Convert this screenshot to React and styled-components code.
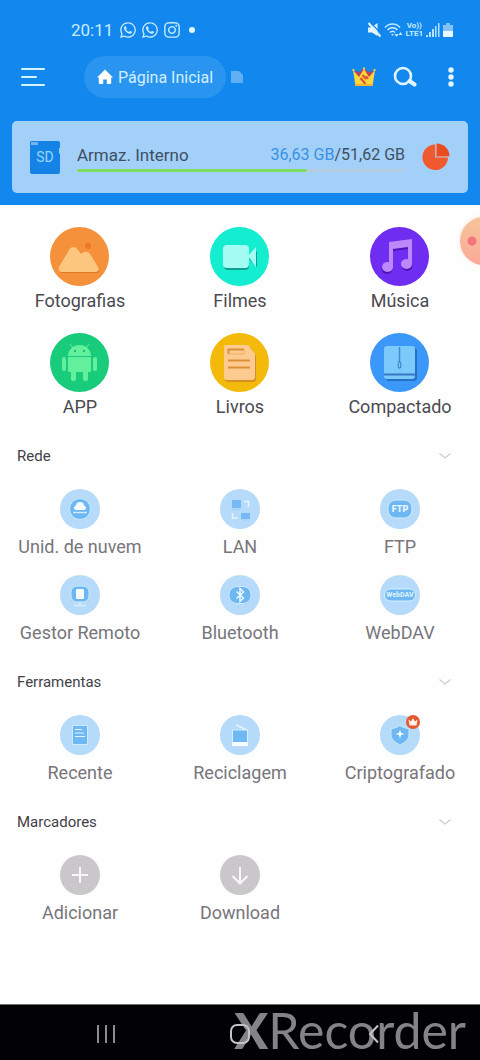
import { useState } from "react";
import styled, { createGlobalStyle } from "styled-components";
import { FaInstagram, FaWhatsapp } from "react-icons/fa";

const GlobalStyle = createGlobalStyle`
  * {
    box-sizing: border-box;
  }
  body {
    margin: 0;
    background: #fefefe;
    font-family: Roboto, "Liberation Sans", sans-serif;
  }
  button {
    margin: 0;
    padding: 0;
    border: none;
    background: none;
    font-family: inherit;
    cursor: pointer;
  }
  svg {
    display: block;
    flex-shrink: 0;
  }
`;

/* ---------- status bar icons ---------- */

const MuteIcon = () => (
  <svg width="14" height="16" viewBox="0 0 14 16">
    <path d="M1 5.500h3L10.500 1v13L5 10.500H1z" fill="#e4f7ff" />
    <path d="M4 1L14 11.500" stroke="#1287ee" strokeWidth="1.200" />
    <path d="M1.500 1L13.500 14.500" stroke="#e4f7ff" strokeWidth="2" />
  </svg>
);

const WifiIcon = () => (
  <svg width="19" height="16" viewBox="0 0 19 16" fill="none" stroke="#c4eaff">
    <path d="M1 5.500C5 0.800 12 0.800 16 5.500" strokeWidth="1.600" />
    <path d="M3.500 8C6.500 4.800 10.500 4.800 13.500 8" strokeWidth="1.600" />
    <path d="M6 10.500C7.500 9 9.500 9 11 10.500" strokeWidth="1.600" />
    <circle cx="8.500" cy="12.800" r="1" fill="#c4eaff" stroke="none" />
    <path
      d="M10.500 12h4l-2 3zM14.500 13h4l-2-3z"
      fill="#c4eaff"
      stroke="none"
    />
  </svg>
);

const SignalIcon = () => (
  <svg width="14" height="16" viewBox="0 0 14 16" fill="#b4e0ff">
    <rect x="0" y="13" width="2" height="2" />
    <rect x="3" y="10" width="2" height="5" />
    <rect x="6" y="7" width="2" height="8" />
    <rect x="9" y="4" width="1.500" height="11" />
    <rect x="12" y="1" width="1.500" height="14" />
  </svg>
);

const BatteryIcon = () => (
  <svg width="10" height="16" viewBox="0 0 10 16">
    <path d="M3 1h4v2h3v6H0V3h3z" fill="#86c1f7" />
    <path d="M0 9h10v5a1 1 0 0 1-1 1H1a1 1 0 0 1-1-1z" fill="#e9faff" />
  </svg>
);

/* ---------- toolbar icons ---------- */

const MenuIcon = () => (
  <svg width="24" height="20" viewBox="0 0 24 20" fill="#d4f3ff">
    <rect x="0" y="1" width="24" height="2" rx="1" />
    <rect x="0" y="9" width="16" height="2" rx="1" />
    <rect x="0" y="17" width="24" height="2" rx="1" />
  </svg>
);

const HomeIcon = () => (
  <svg width="16" height="16" viewBox="0 0 16 16" fill="#fff">
    <path d="M8 0.500L16 8.500h-1.800V14a1 1 0 0 1-1 1H9.800v-4.500H6.200V15H2.800a1 1 0 0 1-1-1V8.500H0z" />
  </svg>
);

const CrownIcon = () => (
  <svg width="24" height="20" viewBox="0 0 24 20">
    <path d="M3 4l5 1 4-4 4 4 5-1-2 10H5z" fill="#b8435f" />
    <path d="M1 3l6 7 5-8 5 8 6-7-2.500 16h-17z" fill="#fbd63a" />
    <path
      d="M10.500 8l3.500 4M8.500 11l5 6M14 9l2 3"
      stroke="#e2503c"
      strokeWidth="2"
    />
    <path d="M3.500 17h17l-.3 2H3.800z" fill="#f5b32e" />
    <circle cx="1.500" cy="3" r="1.200" fill="#f2c64e" />
    <circle cx="12" cy="1.500" r="1.200" fill="#f2c64e" />
    <circle cx="22.500" cy="3" r="1.200" fill="#f2c64e" />
  </svg>
);

const SearchIcon = () => (
  <svg width="24" height="22" viewBox="0 0 24 22" fill="none" stroke="#dff5ff">
    <circle cx="10" cy="10" r="8" strokeWidth="2.600" />
    <path d="M16.500 15L21.500 18.500" strokeWidth="4" strokeLinecap="round" />
  </svg>
);

const MoreIcon = () => (
  <svg width="6" height="20" viewBox="0 0 6 20" fill="#e4f7ff">
    <circle cx="3" cy="3" r="2.700" />
    <circle cx="3" cy="10" r="2.700" />
    <circle cx="3" cy="17" r="2.700" />
  </svg>
);

const TabIcon = () => (
  <svg width="14" height="14" viewBox="0 0 14 14">
    <path d="M1 1h8l4 4v7a1 1 0 0 1-1 1H1z" fill="#5fb0f5" />
  </svg>
);

/* ---------- storage card icons ---------- */

const SdIcon = () => (
  <svg width="30" height="34" viewBox="0 0 30 34">
    <path
      d="M1 1h27a2 2 0 0 1 2 2v5h-1v5l1 1v18a2 2 0 0 1-2 2H2a2 2 0 0 1-2-2V2z"
      fill="#1583e6"
    />
    <path d="M1 2h7v3H1z" fill="#6db5f3" />
    <text
      x="15"
      y="22"
      textAnchor="middle"
      fontFamily="Roboto, sans-serif"
      fontSize="14"
      fill="#9bd6fb"
    >
      SD
    </text>
  </svg>
);

const PieIcon = () => (
  <svg width="28" height="28" viewBox="0 0 28 28">
    <path d="M13 1.500A12.800 12.800 0 1 0 26 14.500H13z" fill="#f1592f" />
    <path d="M14.500 0.500V13H27.500A12.800 12.800 0 0 0 14.500 0.500z" fill="#ea4c22" />
    <path d="M14 1v12.500h13" fill="none" stroke="#e99079" />
  </svg>
);

const ChevronIcon = () => (
  <svg width="14" height="8" viewBox="0 0 14 8">
    <path d="M1.500 1.500L7 6l5.500-4.500" fill="none" stroke="#cfccd3" strokeWidth="1.300" />
  </svg>
);

/* ---------- category drawings, 60 x 60 ---------- */

const photos = (
  <>
    <circle cx="38" cy="19" r="3" fill="#e8792a" />
    <path
      d="M13 46c-3 0-4-2-3-4l11-18c2-3 5-3 7 0l3 5c2-3 6-4 8 0l10 13c1 3-1 4-3 4z"
      fill="#e0762a"
    />
    <path
      d="M12 45c-3 0-4-2-3-5l10-17c2-4 7-4 9 0l3 4c3-3 7-3 9 0l8 13c2 3 0 5-3 5z"
      fill="#fdc67f"
    />
  </>
);

const movies = (
  <>
    <g fill="#0da093">
      <rect x="14" y="20" width="25" height="23" rx="4" />
      <path d="M39 32l8 8V24z" />
    </g>
    <g fill="#a3fdf2">
      <rect x="13" y="18" width="26" height="23" rx="4" />
      <path d="M38 29l8-9v20z" />
    </g>
  </>
);

const music = (
  <>
    <g transform="translate(0 2)" fill="#4a17b5">
      <path d="M19 15l23-3v26h-4V20l-15 2v18h-4z" />
      <ellipse cx="17" cy="40" rx="5.500" ry="5" />
      <ellipse cx="37" cy="37" rx="5.500" ry="5" />
    </g>
    <g fill="#bd88fb">
      <path d="M19 15l23-3v26h-4V20l-15 2v18h-4z" />
      <ellipse cx="17.500" cy="40" rx="5.500" ry="5" />
      <ellipse cx="36.500" cy="37" rx="5.500" ry="5" />
    </g>
  </>
);

const android = (
  <g fill="#63f09c">
    <path d="M18 23a11.500 11 0 0 1 23 0z" />
    <path d="M20 11l3 4M39 11l-3 4" stroke="#63f09c" />
    <rect x="18" y="24" width="23" height="15" rx="1" />
    <rect x="12" y="24" width="4" height="14" rx="2" />
    <rect x="43" y="24" width="4" height="14" rx="2" />
    <rect x="21" y="36" width="5" height="12" rx="2" />
    <rect x="33" y="36" width="5" height="12" rx="2" />
    <circle cx="25" cy="18" r="1" fill="#17a765" />
    <circle cx="34" cy="18" r="1" fill="#17a765" />
  </g>
);

const books = (
  <>
    <path d="M18 14h22l6 9v23a3 3 0 0 1-3 3H18a3 3 0 0 1-3-3V17z" fill="#d68f26" />
    <path d="M17 12h21l7 9v23a3 3 0 0 1-3 3H17a3 3 0 0 1-3-3V15a3 3 0 0 1 3-3z" fill="#fdca90" />
    <path d="M18.500 21v-4.500H34" fill="none" stroke="#dc8f35" strokeWidth="2" />
    <path d="M34 17v4H19" fill="none" stroke="#f0ae60" />
    <path d="M18 27.500h22M18 34.500h22" stroke="#dc8f35" strokeWidth="2" />
  </>
);

const zip = (
  <>
    <rect x="16" y="15" width="31" height="33" rx="3" fill="#2670c6" />
    <rect x="14" y="13" width="31" height="33" rx="3" fill="#7ccafc" />
    <path d="M14 41.500h31" stroke="#3779c0" strokeWidth="2" />
    <path d="M29.500 14v15" stroke="#4588cc" strokeWidth="1.500" />
    <path d="M29.500 28l1.500 3-.5 4h-2l-.5-4z" fill="#7ccafc" stroke="#3779c0" />
  </>
);

/* ---------- network and tool drawings, 40 x 40 ---------- */

const cloud = (
  <>
    <circle cx="20" cy="20" r="10.500" fill="#6fb7f2" stroke="#c9ecff" />
    <path d="M15 21a2.500 2.500 0 0 1 1-4.500 4 3.500 0 0 1 8 0 2.500 2.500 0 0 1 1 4.500z" fill="#f4fcff" />
    <path d="M13 23.500h14" stroke="#cdeaff" strokeWidth="1.500" />
  </>
);

const lan = (
  <>
    <rect x="12" y="11" width="9" height="8" fill="#78b9f5" />
    <rect x="21" y="24" width="9" height="6" fill="#78b9f5" />
    <path d="M24 12.500h4.500V18M12.500 24v5H18" fill="none" stroke="#e4f6ff" strokeWidth="1.500" />
    <path d="M12 20.500h9M21 31h9" stroke="#a5d1f6" />
  </>
);

const ftp = (
  <>
    <rect x="8" y="11" width="24" height="18" rx="8" fill="#6fb7f2" stroke="#c9ecff" />
    <text
      x="20"
      y="23"
      textAnchor="middle"
      fontFamily="Roboto, sans-serif"
      fontWeight="900"
      fontSize="9"
      fill="#e8f8ff"
    >
      FTP
    </text>
  </>
);

const remote = (
  <>
    <rect x="11" y="11" width="18" height="16" rx="6" fill="#6fb7f2" stroke="#c9ecff" />
    <rect x="16" y="14" width="8" height="10" rx="1" fill="#f4fcff" />
    <path d="M20 27v3M14 30.500h12" stroke="#d8f1ff" strokeWidth="1.500" />
  </>
);

const bluetooth = (
  <>
    <rect x="9" y="11.500" width="22" height="17" rx="8" fill="#6fb7f2" stroke="#c9ecff" />
    <path
      d="M16.500 16.500l7 6.500-3.500 3.500v-13l3.500 3.500-7 6.500"
      fill="none"
      stroke="#f1fbff"
      strokeWidth="1.400"
    />
  </>
);

const webdav = (
  <>
    <rect x="4.500" y="14" width="31" height="12" rx="6" fill="#6fb7f2" stroke="#d3f1ff" />
    <text
      x="20"
      y="22"
      textAnchor="middle"
      fontFamily="Roboto, sans-serif"
      fontWeight="900"
      fontSize="7"
      fill="#d3efff"
    >
      WebDAV
    </text>
  </>
);

const recent = (
  <>
    <rect x="12.500" y="10.500" width="15" height="19" fill="#70b8f3" stroke="#c9ecff" />
    <path d="M15 14.500h7M15 18h9M15 21.500h10" stroke="#e4f6ff" strokeWidth="1.200" />
  </>
);

const recycle = (
  <>
    <path d="M16 10l11 5" stroke="#e4f6ff" strokeWidth="1.500" />
    <path d="M12.500 15h15v13h-15z" fill="#70b8f3" stroke="#d5f0ff" />
    <path d="M12 27h16v4H12z" fill="#f4fcff" />
  </>
);

const shield = (
  <>
    <path
      d="M20 10.500c3 2 6 3 9 3v6c0 5-4 8-9 10.500-5-2.500-9-5.500-9-10.500v-6c3 0 6-1 9-3z"
      fill="#6fb7f2"
      stroke="#c9ecff"
    />
    <path d="M20 14.500l1 3.500 3.500 1-3.500 1-1 3.500-1-3.500-3.500-1 3.500-1z" fill="#fff" />
    <circle cx="33" cy="7" r="7" fill="#e6572f" />
    <path d="M28.500 4.500l2.500 2 2-3.500 2 3.500 2.500-2-1 6h-7z" fill="#fff1ea" />
  </>
);

const add = <path d="M12 20h16M20 12v16" stroke="#f7f7f8" strokeWidth="2" />;

const download = (
  <path
    d="M20 12v16M12.500 21l7.500 7.500 7.500-7.500"
    fill="none"
    stroke="#f7f7f8"
    strokeWidth="2"
  />
);

const categories = [
  { label: "Fotografias", color: "#f5913b", art: photos },
  { label: "Filmes", color: "#14edcf", art: movies },
  { label: "Música", color: "#702df2", art: music },
  { label: "APP", color: "#18cc7c", art: android },
  { label: "Livros", color: "#f4ba0b", art: books },
  { label: "Compactado", color: "#3b98f8", art: zip },
];

const sections = [
  {
    title: "Rede",
    color: "#b5dafa",
    items: [
      { label: "Unid. de nuvem", art: cloud },
      { label: "LAN", art: lan },
      { label: "FTP", art: ftp },
      { label: "Gestor Remoto", art: remote },
      { label: "Bluetooth", art: bluetooth },
      { label: "WebDAV", art: webdav },
    ],
  },
  {
    title: "Ferramentas",
    color: "#b5dafa",
    items: [
      { label: "Recente", art: recent },
      { label: "Reciclagem", art: recycle },
      { label: "Criptografado", art: shield },
    ],
  },
  {
    title: "Marcadores",
    color: "#c9c7ca",
    items: [
      { label: "Adicionar", art: add },
      { label: "Download", art: download },
    ],
  },
];

function Section({ title, color, items }) {
  const [open, setOpen] = useState(true);

  return (
    <section>
      <SectionToggle aria-expanded={open} onClick={() => setOpen(!open)}>
        {title}
        <ChevronIcon />
      </SectionToggle>
      {open && (
        <SmallGrid>
          {items.map((item) => (
            <SmallTile key={item.label}>
              <svg width="40" height="40" viewBox="0 0 40 40">
                <circle cx="20" cy="20" r="20" fill={color} />
                {item.art}
              </svg>
              {item.label}
            </SmallTile>
          ))}
        </SmallGrid>
      )}
    </section>
  );
}

export default function App() {
  return (
    <Page>
      <GlobalStyle />
      <Header>
        <StatusBar>
          <StatusGroup>
            <time>20:11</time>
            <FaWhatsapp size={18} />
            <FaWhatsapp size={18} />
            <FaInstagram size={18} />
            <Dot />
          </StatusGroup>
          <StatusIcons>
            <MuteIcon />
            <WifiIcon />
            <Network>
              <span>Vo))</span>
              <span>LTE1</span>
            </Network>
            <SignalIcon />
            <BatteryIcon />
          </StatusIcons>
        </StatusBar>
        <Toolbar>
          <IconButton aria-label="Menu">
            <MenuIcon />
          </IconButton>
          <Tabs>
            <HomeTab>
              <HomeIcon />
              Página Inicial
            </HomeTab>
            <TabIcon />
          </Tabs>
          <Actions>
            <IconButton aria-label="Premium">
              <CrownIcon />
            </IconButton>
            <IconButton aria-label="Pesquisar">
              <SearchIcon />
            </IconButton>
            <MoreButton aria-label="Mais">
              <MoreIcon />
            </MoreButton>
          </Actions>
        </Toolbar>
        <StorageCard>
          <SdIcon />
          <StorageInfo>
            <StorageText>
              <StorageName htmlFor="storage">Armaz. Interno</StorageName>
              <span>
                <Used>36,63 GB</Used>/51,62 GB
              </span>
            </StorageText>
            <StorageBar id="storage" value="70" max="100" />
          </StorageInfo>
          <PieIcon />
        </StorageCard>
      </Header>

      <Main>
        <BigGrid>
          {categories.map((item) => (
            <BigTile key={item.label}>
              <svg width="60" height="60" viewBox="0 0 60 60">
                <circle cx="29.500" cy="29.500" r="29.500" fill={item.color} />
                {item.art}
              </svg>
              {item.label}
            </BigTile>
          ))}
        </BigGrid>
        {sections.map((section) => (
          <Section key={section.title} {...section} />
        ))}
        <Bubble aria-label="Gravador" />
      </Main>

      <NavBar>
        <Watermark>
          <b>X</b>Recorder
        </Watermark>
        <NavButton aria-label="Recentes">
          <svg width="20" height="20" viewBox="0 0 20 20">
            <path d="M2 1v18M10 1v18M18 1v18" stroke="#8d8d8f" strokeWidth="2" />
          </svg>
        </NavButton>
        <NavButton aria-label="Início">
          <svg width="20" height="20" viewBox="0 0 20 20">
            <rect x="1" y="1" width="18" height="18" rx="6" fill="none" stroke="#c4c4c6" strokeWidth="2" />
          </svg>
        </NavButton>
        <NavButton aria-label="Voltar">
          <svg width="20" height="20" viewBox="0 0 20 20">
            <path d="M14 1.500L6 10l8 8.500" fill="none" stroke="#c4c4c6" strokeWidth="2" />
          </svg>
        </NavButton>
      </NavBar>
    </Page>
  );
}

const Page = styled.div`
  display: flex;
  flex-direction: column;
  min-height: 100vh;
  overflow: hidden;
`;

const Header = styled.header`
  padding: 20px 12px 12px;
  background: #1287ee;
`;

const StatusBar = styled.div`
  display: flex;
  justify-content: space-between;
  padding: 0 15px 0 59px;
  font-size: 17px;
  line-height: 20px;
  color: #c8ecff;
`;

const StatusGroup = styled.div`
  display: flex;
  align-items: center;
  gap: 4px;

  time {
    margin-right: 2px;
  }
`;

const StatusIcons = styled(StatusGroup)`
  gap: 3px;
`;

const Dot = styled.i`
  width: 6px;
  height: 6px;
  margin-left: 4px;
  border-radius: 50%;
  background: #e4f7ff;
`;

const Network = styled.span`
  display: flex;
  flex-direction: column;
  align-items: center;
  font-size: 8px;
  line-height: 8px;
  font-weight: 700;
`;

const Toolbar = styled.div`
  display: flex;
  align-items: center;
  margin-top: 16px;
  padding: 0 14px 0 9px;
`;

const IconButton = styled.button`
  display: grid;
  place-items: center;
`;

const MoreButton = styled(IconButton)`
  margin-left: 14px;
`;

const Tabs = styled.nav`
  display: flex;
  flex: 1;
  align-items: center;
  gap: 4px;
  margin-left: 39px;
`;

const HomeTab = styled.button`
  display: flex;
  align-items: center;
  gap: 5px;
  height: 42px;
  padding: 0 13px;
  border-radius: 21px;
  background: #2a95f0;
  font-size: 16px;
  color: #d3f0ff;
`;

const Actions = styled.div`
  display: flex;
  align-items: center;
  gap: 17px;
`;

const StorageCard = styled.section`
  display: flex;
  align-items: center;
  gap: 17px;
  height: 72px;
  margin-top: 23px;
  padding: 0 18px;
  border-radius: 5px;
  background: #a2d0f9;
`;

const StorageInfo = styled.div`
  flex: 1;
`;

const StorageText = styled.div`
  display: flex;
  justify-content: space-between;
  font-size: 16px;
  line-height: 24px;
  color: #3f4f63;
`;

const StorageName = styled.label`
  font-size: 17px;
`;

const Used = styled.span`
  color: #3790e4;
`;

const StorageBar = styled.progress`
  display: block;
  width: 100%;
  height: 3px;
  margin-top: 2px;
  border: none;
  appearance: none;

  &::-webkit-progress-bar {
    border-radius: 2px;
    background: #b5cbdf;
  }
  &::-webkit-progress-value {
    border-radius: 2px;
    background: #80dc5c;
  }
`;

const Main = styled.main`
  position: relative;
  flex: 1;
  padding: 22px 0 40px;
`;

const BigGrid = styled.div`
  display: grid;
  grid-template-columns: repeat(3, 1fr);
  row-gap: 22px;
`;

const SmallGrid = styled(BigGrid)`
  row-gap: 18px;
`;

const BigTile = styled.button`
  display: flex;
  flex-direction: column;
  align-items: center;
  gap: 4px;
  font-size: 18px;
  line-height: 20px;
  color: #4b4a4f;
`;

const SmallTile = styled(BigTile)`
  gap: 8px;
  color: #77757b;
`;

const SectionToggle = styled.button`
  display: flex;
  align-items: center;
  justify-content: space-between;
  width: 100%;
  padding: 28px 28px 22px 17px;
  font-size: 15px;
  line-height: 22px;
  color: #434147;
`;

/* recorder bubble docked half outside the right edge */
const Bubble = styled.button`
  position: absolute;
  top: 12px;
  right: -28px;
  width: 48px;
  height: 48px;
  border-radius: 50%;
  background:
    radial-gradient(circle at 12px 24px, #f4747a 4px, transparent 5px),
    linear-gradient(#f6c49a, #fba999);
  box-shadow: 0 0 4px #f9e3d2;
`;

const NavBar = styled.footer`
  position: relative;
  display: grid;
  grid-template-columns: repeat(3, 1fr);
  height: 56px;
  padding: 2px 39px 0;
  border-top: 1px solid #6e6e6e;
  background: #020103;
`;

const NavButton = styled.button`
  display: grid;
  place-items: center;
  z-index: 1;
`;

const Watermark = styled.span`
  position: absolute;
  right: 14px;
  bottom: 6px;
  font-family: Lato, sans-serif;
  font-size: 50px;
  line-height: 48px;
  color: #858387;
  pointer-events: none;

  b {
    font-weight: 900;
  }
`;
